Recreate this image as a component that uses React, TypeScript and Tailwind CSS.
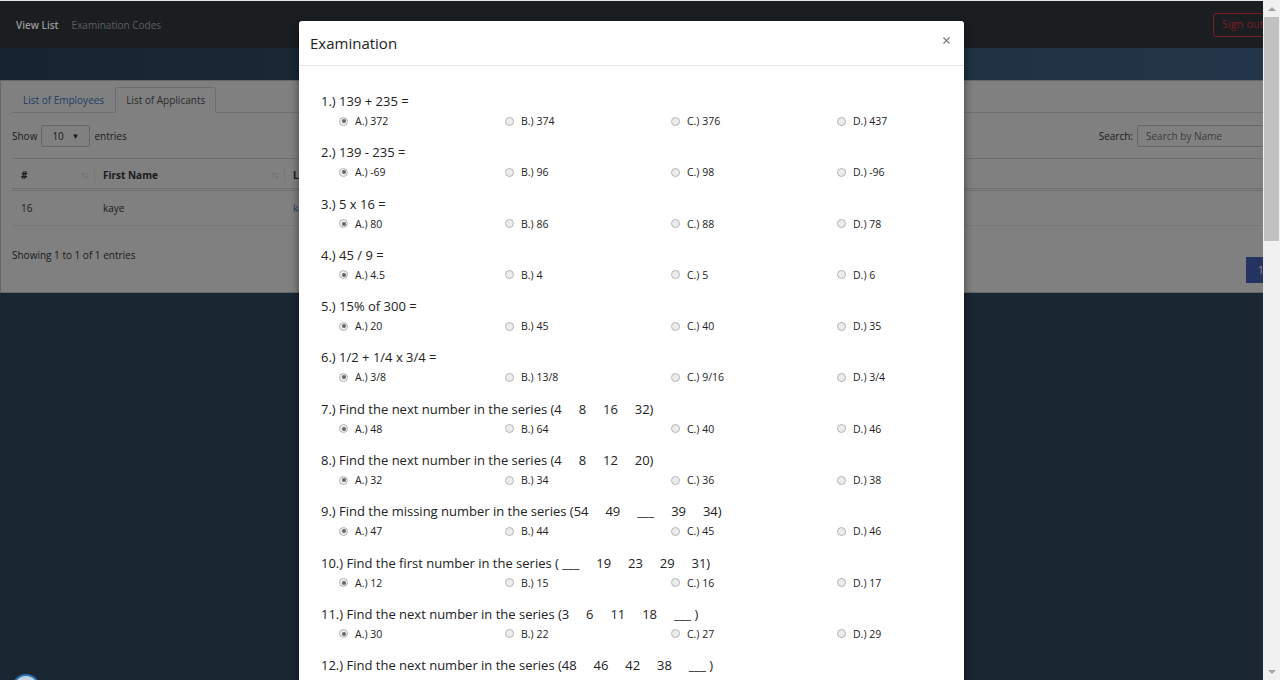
import { X } from "lucide-react";

type Question = { label: string; options: string[] };

const questions: Question[] = [
    { label: "1.) 139 + 235 =", options: ["372", "374", "376", "437"] },
    { label: "2.) 139 - 235 =", options: ["-69", "96", "98", "-96"] },
    { label: "3.) 5 x 16 =", options: ["80", "86", "88", "78"] },
    { label: "4.) 45 / 9 =", options: ["4.5", "4", "5", "6"] },
    { label: "5.) 15% of 300 =", options: ["20", "45", "40", "35"] },
    { label: "6.) 1/2 + 1/4 x 3/4 =", options: ["3/8", "13/8", "9/16", "3/4"] },
    { label: "7.) Find the next number in the series (4     8     16     32)", options: ["48", "64", "40", "46"] },
    { label: "8.) Find the next number in the series (4     8     12     20)", options: ["32", "34", "36", "38"] },
    { label: "9.) Find the missing number in the series (54     49     ___     39     34)", options: ["47", "44", "45", "46"] },
    { label: "10.) Find the first number in the series ( ___     19     23     29     31)", options: ["12", "15", "16", "17"] },
    { label: "11.) Find the next number in the series (3     6     11     18     ___ )", options: ["30", "22", "27", "29"] },
    { label: "12.) Find the next number in the series (48     46     42     38     ___ )", options: ["", "", "", ""] },
];

const letters = ["A.)", "B.)", "C.)", "D.)"];

const Radio = ({ checked }: { checked: boolean }) => (
    <span className="flex h-[9px] w-[9px] shrink-0 items-center justify-center rounded-full border border-[#b5b5b5] bg-[#ececec]">
        {checked && <span className="h-[4px] w-[4px] rounded-full bg-[#666]" />}
    </span>
);

const SortIcon = () => <span className="text-[9px] tracking-[-1px] text-[#5e5e5e]">↑↓</span>;

// page behind the modal is drawn with its backdrop-dimmed colours
const App = () => {
    return (
        <div className="flex h-[680px] w-[1280px] overflow-hidden font-['Open_Sans',sans-serif]">
            <div className="relative h-full w-[1263px] overflow-hidden bg-[#1b2633]">
                {/* Navbar */}
                <div className="flex h-12 items-center justify-between border-t border-[#e6e6e6] bg-[#1b1e21] pl-4">
                    <div className="flex items-center gap-[13px] pt-[2px] text-[10px]">
                        <span className="font-semibold text-[#9a9a9a]">View List</span>
                        <span className="text-[#5c5e60]">Examination Codes</span>
                    </div>
                    <div className="mr-[-12px] flex h-6 w-[62px] items-center rounded-[3px] border border-[#7a1c25] pl-[8px] text-[11px] text-[#7a1c25]">Sign out</div>
                </div>

                {/* Band */}
                <div className="h-8 bg-gradient-to-r from-[#172330] to-[#233649]" />

                {/* Card */}
                <div className="w-[1300px] border border-[#666] bg-[#808080] pb-[9px] pl-[11px] pt-[6px] text-[10px] text-[#1a1a1a]">
                    <div className="mr-[-11px] flex h-[26px] items-end border-b border-[#6e6e6e]">
                        <div className="flex h-[25px] items-center px-[11px] pt-[1px] text-[#1d3c66]">List of Employees</div>
                        <div className="mb-[-1px] flex h-[26px] items-center rounded-t-[3px] border border-b-[#808080] border-[#6e6e6e] bg-[#808080] px-[10px] pt-[1px] text-[#2a2a2a]">List of Applicants</div>
                    </div>

                    <div className="mt-[12px] flex h-[22px] items-center">
                        <span>Show</span>
                        <div className="ml-[4px] flex h-[22px] w-[49px] items-center justify-between rounded-[3px] border border-[#666] px-[10px]">
                            <span>10</span>
                            <span className="text-[8px]">▼</span>
                        </div>
                        <span className="ml-[4px]">entries</span>
                        <span className="ml-auto">Search:</span>
                        <div className="ml-[4px] flex h-[22px] w-[162px] items-center rounded-[3px] border border-[#666] pl-2 text-[#3c3c3c]">Search by Name</div>
                    </div>

                    <div className="mt-[11px] w-[1280px] border-t border-[#6e6e6e]">
                        <div className="flex h-[32px] items-center border-b-[3px] border-double border-[#6e6e6e] pt-[3px] font-bold">
                            <div className="flex w-[82px] items-center justify-between pl-[9px] pr-[6px]">
                                <span>#</span>
                                <SortIcon />
                            </div>
                            <div className="flex w-[190px] items-center justify-between border-l border-[#777] pl-[8px] pr-[6px]">
                                <span>First Name</span>
                                <SortIcon />
                            </div>
                            <div className="border-l border-[#777] pl-[8px]">Last Name</div>
                        </div>
                        <div className="flex h-[35px] items-center border-b border-[#777] pt-[1px]">
                            <div className="w-[82px] pl-[9px]">16</div>
                            <div className="w-[190px] pl-[9px]">kaye</div>
                            <div className="pl-[9px] text-[#1d3c66]">kaye</div>
                        </div>
                    </div>

                    <div className="mt-[22px] flex items-start">
                        <span className="leading-[14px]">Showing 1 to 1 of 1 entries</span>
                        <div className="ml-auto mr-[23px] mt-[9px] flex h-[26px] w-[30px] items-center justify-center bg-[#24335f] text-[11px] text-[#8a8a8a]">1</div>
                    </div>
                </div>

                {/* Chat bubble */}
                <div className="absolute left-[12px] top-[674px] h-[28px] w-[28px] rounded-full border-2 border-[#2a6fb0] bg-[#c5d3e0]" />

                {/* Modal */}
                <div className="absolute left-[299px] top-[21px] w-[665px] rounded-t-[3px] bg-white text-[#222] shadow-[0_3px_9px_rgba(0,0,0,0.5)]">
                    <div className="flex h-[45px] items-center justify-between border-b border-[#e5e5e5] pl-[11px] pr-[12px]">
                        <span className="text-[15px]">Examination</span>
                        <X className="mb-[6px] h-[11px] w-[11px] text-[#777]" strokeWidth={2.5} />
                    </div>
                    <div className="pl-[22px] pt-[26px]">
                        {questions.map((q, i) => (
                            <div key={i} className="mb-[14.3px]">
                                <div className="h-[18px] whitespace-pre text-[13px] leading-[18px]">{q.label}</div>
                                <div className="ml-[18px] mt-[3px] grid h-[16px] grid-cols-[166px_166px_166px_166px] text-[10.5px] leading-[16px]">
                                    {q.options.map((opt, j) => (
                                        <div key={j} className="flex items-center gap-[7px]">
                                            <Radio checked={j === 0} />
                                            <span>
                                                {letters[j]} {opt}
                                            </span>
                                        </div>
                                    ))}
                                </div>
                            </div>
                        ))}
                    </div>
                </div>
            </div>

            {/* Scrollbar */}
            <div className="flex h-full w-[17px] flex-col items-center bg-[#f1f1f1]">
                <div className="flex h-[17px] w-full items-center justify-center">
                    <span className="h-0 w-0 border-x-[4px] border-b-[4px] border-x-transparent border-b-[#a3a3a3]" />
                </div>
                <div className="h-[224px] w-[15px] bg-[#c1c1c1]" />
                <div className="mt-auto flex h-[17px] w-full items-center justify-center">
                    <span className="h-0 w-0 border-x-[4px] border-t-[4px] border-x-transparent border-t-[#a3a3a3]" />
                </div>
            </div>
        </div>
    );
};

export default App;
